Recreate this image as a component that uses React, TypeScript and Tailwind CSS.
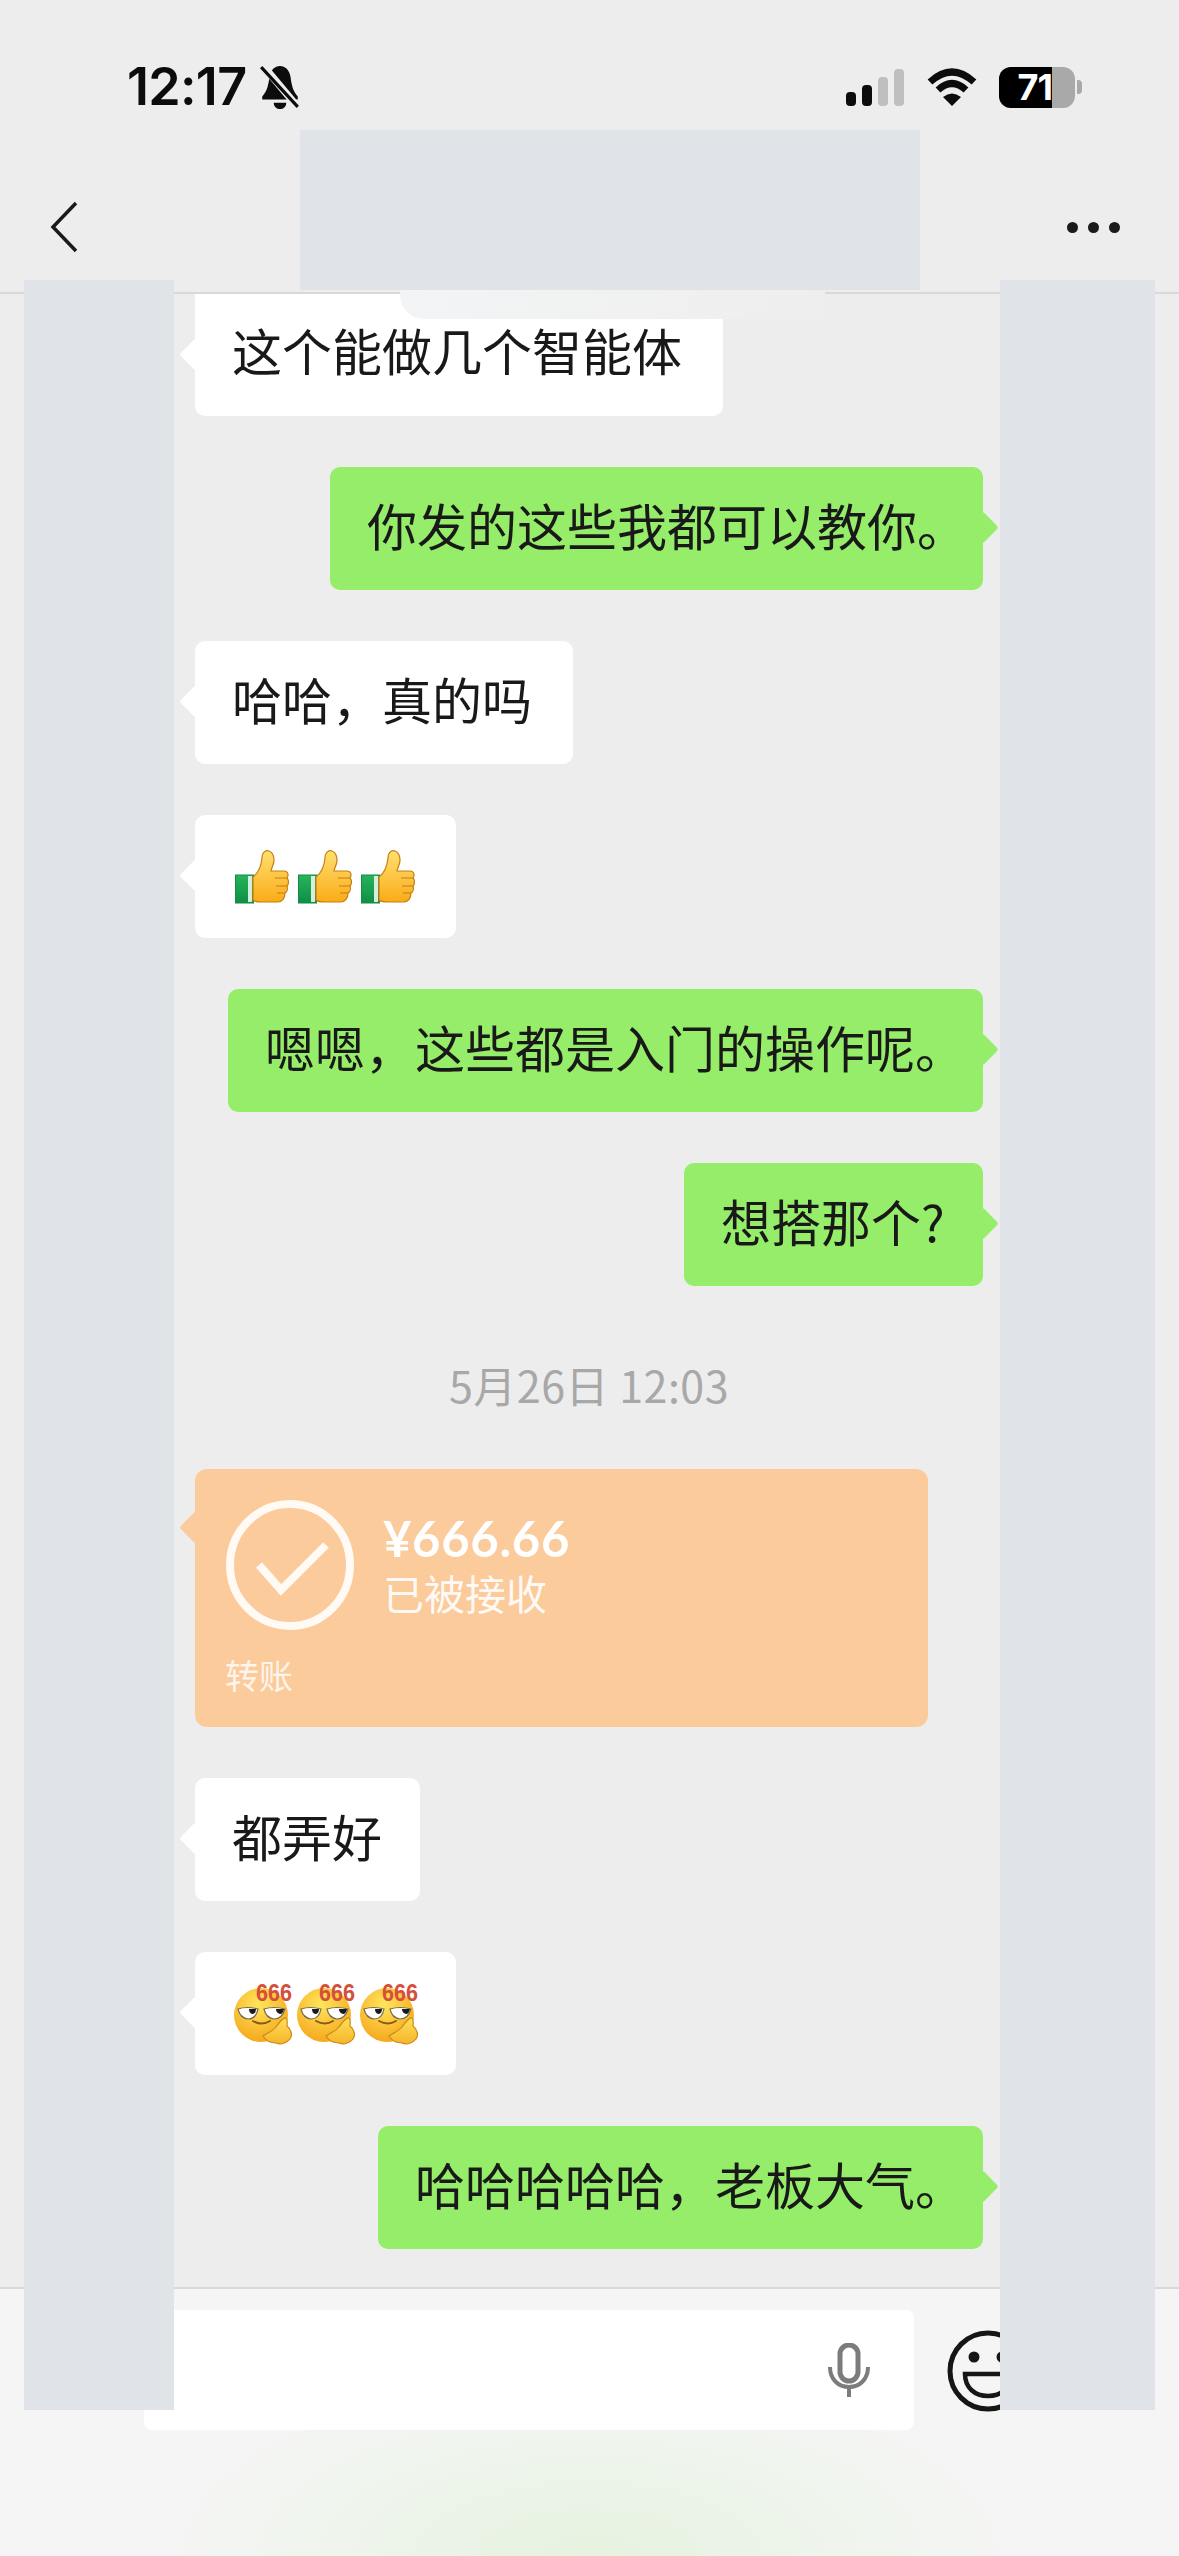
import React from "react";

const cjk = "font-['Noto_Sans_CJK_SC','Noto_Sans',sans-serif]";

function Thumb() {
  return (
    <svg width="54" height="54" viewBox="0 0 54 54" className="shrink-0">
      <defs>
        <linearGradient id="hand" x1="0" y1="0" x2="0" y2="1">
          <stop offset="0" stopColor="#ffe070" />
          <stop offset="1" stopColor="#fbab18" />
        </linearGradient>
        <linearGradient id="cuff" x1="0" y1="0" x2="0" y2="1">
          <stop offset="0" stopColor="#27b35c" />
          <stop offset="1" stopColor="#0f8f45" />
        </linearGradient>
      </defs>
      <rect x="0.5" y="25" width="18" height="28" fill="url(#cuff)" stroke="#178a47" strokeWidth="1" />
      <rect x="13" y="26" width="4" height="26" fill="#d6efdc" />
      <path
        d="M18 27C22 24 26 18 27 8C27 2 31 0 34 1C39 3 40 10 38 15C37 18 36 20 36 21L49 21C53 21 54 25 52 28C54 30 54 34 52 36C53 39 52 42 50 43C50 48 47 52 43 52L27 52C23 52 20 52 18 50Z"
        fill="url(#hand)"
        stroke="#c57f12"
        strokeWidth="1.2"
      />
      <path d="M40 28L52 28M41 36L52 36M42 43L50 43" stroke="#c57f12" strokeWidth="1.2" fill="none" />
    </svg>
  );
}

function Face() {
  return (
    <svg width="62" height="68" viewBox="0 -6 62 68" className="shrink-0 -mt-[6px] -mr-[4px]">
      <defs>
        <radialGradient id="face" cx="0.45" cy="0.3" r="0.8">
          <stop offset="0" stopColor="#ffe65c" />
          <stop offset="1" stopColor="#f39f14" />
        </radialGradient>
        <linearGradient id="fist" x1="0" y1="0" x2="0" y2="1">
          <stop offset="0" stopColor="#ffdf5a" />
          <stop offset="1" stopColor="#f5b52a" />
        </linearGradient>
      </defs>
      <circle cx="27" cy="32" r="27" fill="url(#face)" />
      <path d="M4 26Q13 23 24 26Q22 36 14 36Q6 35 4 26Z" fill="#fff" stroke="#7a6a4a" strokeWidth="1.2" />
      <path d="M30 26Q40 23 51 26Q48 36 40 36Q32 35 30 26Z" fill="#fff" stroke="#7a6a4a" strokeWidth="1.2" />
      <path d="M15 26L22 26Q22 31 18 31Q15 30 15 26Z" fill="#1b1b1b" />
      <path d="M42 26L50 26Q49 31 46 31Q42 30 42 26Z" fill="#1b1b1b" />
      <path d="M19 38Q28 43 36 38" fill="none" stroke="#8a5a10" strokeWidth="2" strokeLinecap="round" />
      <path
        d="M29 53C33 50 39 48 42 44C45 40 49 34 52 35C54 37 53 41 53 43C57 46 59 52 56 56C53 60 47 62 42 60C37 60 32 58 29 53Z"
        fill="url(#fist)"
        stroke="#c98a16"
        strokeWidth="1.2"
      />
      <text
        x="22"
        y="18"
        fontSize="24"
        fontWeight="700"
        fill="#d5503a"
        textLength="36"
        lengthAdjust="spacingAndGlyphs"
        fontFamily="'Liberation Sans',sans-serif"
      >
        666
      </text>
    </svg>
  );
}

function Bubble({
  side,
  width,
  emoji = false,
  children,
}: {
  side: "in" | "out";
  width: string;
  emoji?: boolean;
  children: React.ReactNode;
}) {
  const isOut = side === "out";
  return (
    <div
      className={`relative h-[123px] shrink-0 flex items-center rounded-[10px] pl-[37px] ${width} ${
        isOut ? "self-end bg-[#95ed69]" : "self-start bg-white"
      }`}
    >
      <div
        className={`absolute top-[49px] w-[23px] h-[23px] rotate-45 rounded-[3px] ${
          isOut ? "right-[-11px] bg-[#95ed69]" : "left-[-11px] bg-white"
        }`}
      />
      <div
        className={`relative flex items-center whitespace-nowrap text-[50px] leading-none text-[#191919] ${cjk} ${
          emoji ? "" : "mb-[10px]"
        }`}
      >
        {children}
      </div>
    </div>
  );
}

export default function App() {
  return (
    <div className={`relative w-[1179px] h-[2556px] overflow-hidden flex flex-col bg-[#ededed] ${cjk}`}>
      {/* header */}
      <header className="h-[294px] shrink-0 border-b-2 border-[#d9d9d9] flex flex-col">
        <div className="flex items-center justify-between h-[44px] mt-[65px] pl-[127px] pr-[97px]">
          <div className="flex items-center gap-[13px]">
            <span className="font-['Inter',sans-serif] font-semibold text-[52px] leading-none tracking-[-0.7px] text-[#0c0c0c]">
              12:17
            </span>
            <svg width="42" height="46" viewBox="0 0 40 44">
              <path
                d="M20 2C25 2 29 6 30 12C31 19 32 26 37 31L37 34L3 34L3 31C8 26 9 19 10 12C11 6 15 2 20 2Z"
                fill="#0c0c0c"
              />
              <path d="M14 37L26 37C26 41 23 43 20 43C17 43 14 41 14 37Z" fill="#0c0c0c" />
              <path d="M5 3L36 40" stroke="#ededed" strokeWidth="7" />
              <path d="M2 3L37 41" stroke="#0c0c0c" strokeWidth="3" />
            </svg>
          </div>
          <div className="flex items-center">
            <div className="flex items-end gap-[6px] h-[38px]">
              <div className="w-[10px] h-[14px] rounded-[4px] bg-[#0c0c0c]" />
              <div className="w-[10px] h-[21px] rounded-[4px] bg-[#0c0c0c]" />
              <div className="w-[10px] h-[29px] rounded-[4px] bg-[#bfbfbf]" />
              <div className="w-[10px] h-[37px] rounded-[4px] bg-[#bfbfbf]" />
            </div>
            <svg width="50" height="38" viewBox="0 0 50 38" className="ml-[23px]">
              <path d="M3 14Q25 -6 47 14" fill="none" stroke="#0c0c0c" strokeWidth="7" />
              <path d="M11 22Q25 9 39 22" fill="none" stroke="#0c0c0c" strokeWidth="7" />
              <path d="M16 29Q25 22 34 29L25 38Z" fill="#0c0c0c" />
            </svg>
            <div className="ml-[22px] flex items-center">
              <div className="relative w-[76px] h-[41px] rounded-[12px] overflow-hidden flex bg-[#a9a9a9]">
                <div className="w-[53px] h-full bg-black flex items-center justify-end">
                  <span className="font-['Inter',sans-serif] font-bold text-[36px] leading-none text-white tracking-[-1px]">
                    71
                  </span>
                </div>
              </div>
              <div className="w-[5px] h-[14px] ml-[2px] rounded-r-[4px] bg-[#a9a9a9]" />
            </div>
          </div>
        </div>
        <div className="flex items-center justify-between pl-[50px] pr-[59px] mt-[92px]">
          <svg width="28" height="52" viewBox="0 0 28 52">
            <path d="M26 2L3 26L26 50" fill="none" stroke="#1a1a1a" strokeWidth="3.5" />
          </svg>
          <div className="flex gap-[10px]">
            <div className="w-[11px] h-[11px] rounded-full bg-[#1a1a1a]" />
            <div className="w-[11px] h-[11px] rounded-full bg-[#1a1a1a]" />
            <div className="w-[11px] h-[11px] rounded-full bg-[#1a1a1a]" />
          </div>
        </div>
      </header>

      {/* chat */}
      <main className="flex-1 min-h-0 flex flex-col gap-[51px] pl-[195px] pr-[196px]">
        <Bubble side="in" width="w-[528px] !h-[122px] !items-start pt-[30px] rounded-t-none">
          这个能做几个智能体
        </Bubble>
        <Bubble side="out" width="w-[653px]">你发的这些我都可以教你。</Bubble>
        <Bubble side="in" width="w-[378px]">哈哈，真的吗</Bubble>
        <Bubble side="in" width="w-[261px]" emoji>
          <div className="flex gap-[9px] ml-[3px]">
            <Thumb />
            <Thumb />
            <Thumb />
          </div>
        </Bubble>
        <Bubble side="out" width="w-[755px]">嗯嗯，这些都是入门的操作呢。</Bubble>
        <Bubble side="out" width="w-[299px]">想搭那个?</Bubble>

        <div className="h-[81px] pt-[14px] flex items-center justify-center text-[43px] leading-none text-[#a8a8a8] tracking-[0.5px] shrink-0">
          5月26日 12:03
        </div>

        <div className="relative self-start shrink-0 w-[733px] h-[258px] rounded-[12px] bg-[#fbcb9c] text-white">
          <div className="absolute top-[47px] left-[-11px] w-[23px] h-[23px] rotate-45 rounded-[3px] bg-[#fbcb9c]" />
          <div className="relative flex items-start pl-[31px] pt-[31px]">
            <svg width="128" height="130" viewBox="0 0 128 130" className="shrink-0">
              <ellipse cx="64" cy="65" rx="60" ry="61" fill="none" stroke="#fffaf3" strokeWidth="8" />
              <path d="M33 65L55 90L100 45" fill="none" stroke="#fffaf3" strokeWidth="8" />
            </svg>
            <div className="ml-[29px] flex flex-col">
              <span className="font-['Lato',sans-serif] font-bold text-[49px] leading-[56px] mt-[10px] tracking-[0.7px]">
                ¥666.66
              </span>
              <span className="text-[41px] leading-[48px] mt-[2px] opacity-90">已被接收</span>
            </div>
          </div>
          <div className="relative pl-[30px] mt-[25px] text-[34px] leading-[40px] opacity-80">转账</div>
        </div>

        <Bubble side="in" width="w-[225px]">都弄好</Bubble>
        <Bubble side="in" width="w-[261px]" emoji>
          <div className="flex gap-[5px] ml-[2px]">
            <Face />
            <Face />
            <Face />
          </div>
        </Bubble>
        <Bubble side="out" width="w-[605px]">哈哈哈哈哈，老板大气。</Bubble>
      </main>

      {/* input bar */}
      <footer className="h-[269px] shrink-0 border-t-2 border-[#d9d9d9] bg-[#f5f5f5] bg-[radial-gradient(ellipse_440px_190px_at_50%_100%,#e6f3e0,transparent)] flex items-start pl-[144px] pt-[21px]">
        <div className="w-[770px] h-[120px] rounded-[8px] bg-white flex items-center justify-end pr-[44px]">
          <svg width="42" height="54" viewBox="0 0 42 54">
            <rect x="12" y="2" width="18" height="36" rx="9" fill="none" stroke="#7c7c7c" strokeWidth="5" />
            <path d="M2 24C2 36 10 44 21 44C32 44 40 36 40 24" fill="none" stroke="#7c7c7c" strokeWidth="4" />
            <path d="M21 44L21 54" stroke="#7c7c7c" strokeWidth="4" />
          </svg>
        </div>
        <svg width="82" height="82" viewBox="0 0 82 82" className="ml-[33px] mt-[20px] shrink-0">
          <circle cx="41" cy="41" r="38" fill="none" stroke="#161616" strokeWidth="5" />
          <circle cx="27" cy="27" r="5.5" fill="#161616" />
          <circle cx="55" cy="27" r="5.5" fill="#161616" />
          <path d="M18 44L64 44C64 58 54 66 41 66C28 66 18 58 18 44Z" fill="none" stroke="#161616" strokeWidth="4.5" />
        </svg>
      </footer>

      {/* redaction blocks lying over the screen */}
      <div className="absolute left-[300px] top-[130px] w-[620px] h-[160px] bg-[#e0e3e8]" />
      <div className="absolute left-[400px] top-[290px] w-[425px] h-[29px] rounded-bl-[24px] bg-gradient-to-r from-[#f3f4f5] to-[#eeeeee]" />
      <div className="absolute left-[24px] top-[280px] w-[150px] h-[2130px] bg-[#e0e3e8]" />
      <div className="absolute left-[1000px] top-[280px] w-[155px] h-[2130px] bg-[#e0e3e8]" />
    </div>
  );
}
